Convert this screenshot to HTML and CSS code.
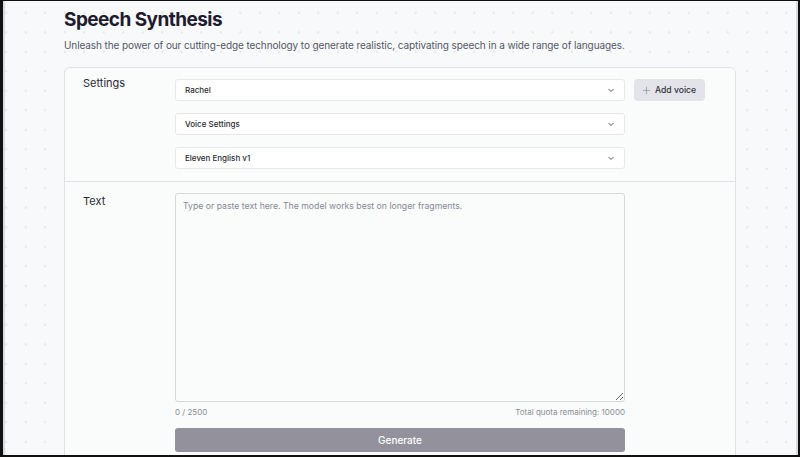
FILE: index.html
```html
<!DOCTYPE html>
<html lang="en">
<head>
<meta charset="utf-8">
<title>Speech Synthesis</title>
<link rel="stylesheet" href="styles.css">
</head>
<body>
<div class="frame"></div>
<main class="page">
  <h1 class="title">Speech Synthesis</h1>
  <p class="subtitle">Unleash the power of our cutting-edge technology to generate realistic, captivating speech in a wide range of languages.</p>
  <section class="card">
    <div class="row">
      <div class="label">Settings</div>
      <div class="controls">
        <div class="line">
          <div class="select"><span>Rachel</span><svg class="chev" viewBox="0 0 10 10"><path d="M2.5 4 L5 6.5 L7.5 4"/></svg></div>
          <button class="add"><svg class="plus" viewBox="0 0 10 10"><path d="M5 1 V9 M1 5 H9"/></svg>Add voice</button>
        </div>
        <div class="select"><span>Voice Settings</span><svg class="chev" viewBox="0 0 10 10"><path d="M2.5 4 L5 6.5 L7.5 4"/></svg></div>
        <div class="select"><span>Eleven English v1</span><svg class="chev" viewBox="0 0 10 10"><path d="M2.5 4 L5 6.5 L7.5 4"/></svg></div>
      </div>
    </div>
    <div class="row">
      <div class="label label-text">Text</div>
      <div class="controls text-controls">
        <textarea class="textarea" placeholder="Type or paste text here. The model works best on longer fragments."></textarea>
        <div class="meta"><span>0 / 2500</span><span>Total quota remaining: 10000</span></div>
        <button class="generate">Generate</button>
      </div>
    </div>
  </section>
</main>
</body>
</html>
```
FILE: styles.css
```css
* { box-sizing: border-box; }
html, body { margin: 0; height: 100%; overflow: hidden; }
body {
  background-color: #f8f9fa;
  background-image: radial-gradient(circle, #e4e6ea 1px, transparent 1.3px);
  background-size: 19.5px 19.5px;
  background-position: 16px 3px;
  font-family: Inter, "Noto Sans", sans-serif;
  color: #1f1d2e;
}
.frame {
  position: fixed;
  inset: 0;
  pointer-events: none;
  border-top: 1px solid #111;
  border-left: 3px solid #111;
  border-right: 2px solid #111;
  border-bottom: 2px solid #111;
  box-shadow: inset 2px 0 0 #d9d9e3, inset -2px 0 0 #d9d9e3;
  z-index: 10;
}
.page {
  padding: 8px 0 0 64px;
  width: 736px;
}
.title {
  margin: 0;
  font-size: 19px;
  font-weight: 700;
  line-height: 24px;
  color: #1e1b2e;
  letter-spacing: -0.55px;
}
.subtitle {
  margin: 6px 0 0;
  font-size: 10px;
  line-height: 14px;
  color: #545866;
  letter-spacing: -0.1px;
}
.card {
  margin-top: 15px;
  background: #fafbfb;
  border: 1px solid #e1e3e7;
  border-radius: 6px;
  height: 420px;
}
.row {
  display: flex;
  padding: 11px 0 12px 18px;
}
.row + .row { border-top: 1px solid #e1e3e7; }
.label {
  width: 92px;
  font-size: 11px;
  line-height: 14px;
  margin-top: -3px;
  color: #2a2a35;
}
.label-text { margin-top: 1px; }
.controls {
  display: flex;
  flex-direction: column;
  gap: 12px;
  width: 530px;
}
.line { display: flex; gap: 9px; }
.select {
  width: 450px;
  height: 22px;
  flex: none;
  background: #fff;
  border: 1px solid #e5e7eb;
  border-radius: 3px;
  display: flex;
  align-items: center;
  justify-content: space-between;
  padding: 0 8px 0 9px;
  font-size: 8px;
  font-weight: 500;
  color: #2b2b33;
}
.chev { width: 10px; height: 10px; }
.chev path { fill: none; stroke: #555; stroke-width: 1; }
.add {
  height: 22px;
  width: 71px;
  border: none;
  border-radius: 4px;
  background: #e3e4ea;
  font-family: inherit;
  font-size: 8.6px;
  font-weight: 500;
  color: #33333d;
  display: flex;
  align-items: center;
  gap: 4px;
  padding: 0 0 0 8px;
}
.plus { width: 9px; height: 9px; }
.plus path { stroke: #9a9aa5; stroke-width: 0.9; fill: none; }
.text-controls { gap: 0; width: 450px; }
.textarea {
  width: 450px;
  height: 209px;
  background: #fafbfb;
  border: 1px solid #d6d8dd;
  border-radius: 3px;
  padding: 7px 7px;
  font-family: inherit;
  font-size: 8.7px;
  resize: vertical;
  margin: 0;
  display: block;
}
.textarea::placeholder { color: #868a94; }
.meta {
  display: flex;
  justify-content: space-between;
  font-size: 8px;
  color: #8a8d97;
  margin-top: 5px;
  line-height: 10px;
}
.generate {
  margin-top: 11px;
  height: 24px;
  width: 450px;
  border: none;
  border-radius: 3px;
  background: #93929c;
  color: #fff;
  font-family: inherit;
  font-size: 10px;
  font-weight: 500;
}
```
